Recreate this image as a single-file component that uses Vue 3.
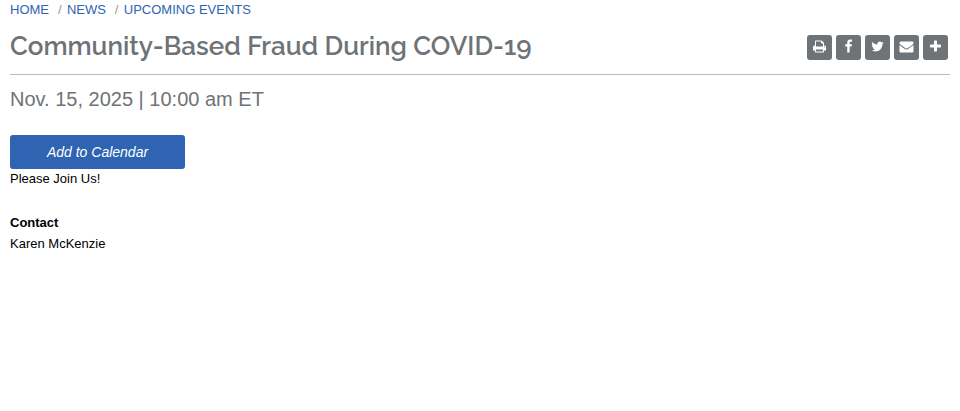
<script setup>
const crumbs = ['HOME', 'NEWS', 'UPCOMING EVENTS']

const actions = [
  { label: 'Print', path: 'M448 1536h896v-256h-896v256zm0-640h896v-384h-160q-40 0-68-28t-28-68v-160h-640v640zm1152 64q0-26-19-45t-45-19-45 19-19 45 19 45 45 19 45-19 19-45zm128 0v416q0 13-9.5 22.5t-22.5 9.5h-224v160q0 40-28 68t-68 28h-960q-40 0-68-28t-28-68v-160h-224q-13 0-22.5-9.5t-9.5-22.5v-416q0-79 56.5-135.5t135.5-56.5h64v-544q0-40 28-68t68-28h672q40 0 88 20t76 48l152 152q28 28 48 76t20 88v256h64q79 0 135.5 56.5t56.5 135.5z' },
  { label: 'Facebook', path: 'M1343 12v264h-157q-86 0-116 36t-30 108v189h293l-39 296h-254v759h-306v-759h-255v-296h255v-218q0-186 104-288.5t277-102.5q147 0 228 12z' },
  { label: 'Twitter', path: 'M1684 408q-67 98-162 167 1 14 1 42 0 130-38 259.5t-115.5 248.5-184.5 210.5-258 146-323 54.5q-271 0-496-145 35 4 78 4 225 0 401-138-105-2-188-64.5t-114-159.5q33 5 61 5 43 0 85-11-112-23-185.5-111.5t-73.5-205.5v-4q68 38 146 41-66-44-105-115t-39-154q0-88 44-163 121 149 294.5 238.5t371.5 99.5q-8-38-8-74 0-134 94.5-228.5t228.5-94.5q140 0 236 102 109-21 205-78-37 115-142 178 93-10 186-50z' },
  { label: 'Email', path: 'M1792 710v794q0 66-47 113t-113 47h-1472q-66 0-113-47t-47-113v-794q44 49 101 87 362 246 497 345 57 42 92.5 65.5t94.5 48 110 24.5h2q51 0 110-24.5t94.5-48 92.5-65.5q170-123 498-345 57-39 100-87zm0-294q0 79-49 151t-122 123q-376 261-468 325-10 7-42.5 31t-54 38.5-52 32.5-57.5 27-50 9h-2q-23 0-50-9t-57.5-27-52-32.5-54-38.5-42.5-31q-91-64-262-182.5t-205-142.5q-62-42-117-115.5t-55-136.5q0-78 41.5-130t118.5-52h1472q65 0 112.5 47t47.5 113z' },
  { label: 'More', path: 'M1600 736v192q0 40-28 68t-68 28h-416v416q0 40-28 68t-68 28h-192q-40 0-68-28t-28-68v-416h-416q-40 0-68-28t-28-68v-192q0-40 28-68t68-28h416v-416q0-40 28-68t68-28h192q40 0 68 28t28 68v416h416q40 0 68 28t28 68z' },
]
</script>

<template>
  <main class="page">
    <nav class="crumbs">
      <span v-for="c in crumbs" :key="c" class="crumb"><a>{{ c }}</a></span>
    </nav>
    <header class="head">
      <h1 class="title">Community-Based Fraud During COVID-19</h1>
      <div class="actions">
        <a v-for="a in actions" :key="a.label" class="action" :aria-label="a.label">
          <svg class="icon" viewBox="-64 -64 1920 1920"><path :d="a.path" /></svg>
        </a>
      </div>
    </header>
    <h2 class="date">Nov. 15, 2025 | 10:00 am ET</h2>
    <button class="calendar">Add to Calendar</button>
    <p class="text">Please Join Us!</p>
    <section class="contact">
      <p class="text strong">Contact</p>
      <p class="text">Karen McKenzie</p>
    </section>
  </main>
</template>

<style>
body {
  background: #fff;
}
</style>

<style scoped>
.page {
  padding: 0 10px;
  font: 13px/20px "Liberation Sans", Arial, sans-serif;
  color: #000;
}
.crumbs {
  display: flex;
  height: 20px;
}
.crumb a {
  color: #2e64b1;
}
.crumb + .crumb::before {
  content: "/";
  color: #999;
  padding: 0 5.4px 0 8.9px;
}
.head {
  display: flex;
  justify-content: space-between;
  height: 54px;
  border-bottom: 1px solid #bbb;
}
.title {
  margin: 8px 0 0;
  font: 600 26px/36px Raleway, Lato, sans-serif;
  color: #6e7377;
  white-space: nowrap;
}
.actions {
  display: flex;
  gap: 4px;
  padding: 15px 2px 0 0;
}
.action {
  display: flex;
  justify-content: center;
  width: 25px;
  height: 25px;
  padding-top: 4px;
  box-sizing: border-box;
  border-radius: 3px;
  background: #6e7377;
}
.icon {
  width: 15px;
  height: 15px;
  fill: #fff;
}
.date {
  margin: 10px 0 0;
  font-size: 20px;
  font-weight: 400;
  line-height: 28px;
  color: #6e7377;
}
.calendar {
  display: block;
  width: 175px;
  height: 34px;
  margin: 22px 0 0;
  padding: 0;
  border: 0;
  border-radius: 3px;
  background: #2e64b1;
  color: #fff;
  font: italic 14px/34px "Liberation Sans", Arial, sans-serif;
}
.text {
  margin: 0;
}
.contact {
  display: grid;
  gap: 1px;
  margin-top: 24px;
}
.strong {
  font-weight: 700;
}
</style>
